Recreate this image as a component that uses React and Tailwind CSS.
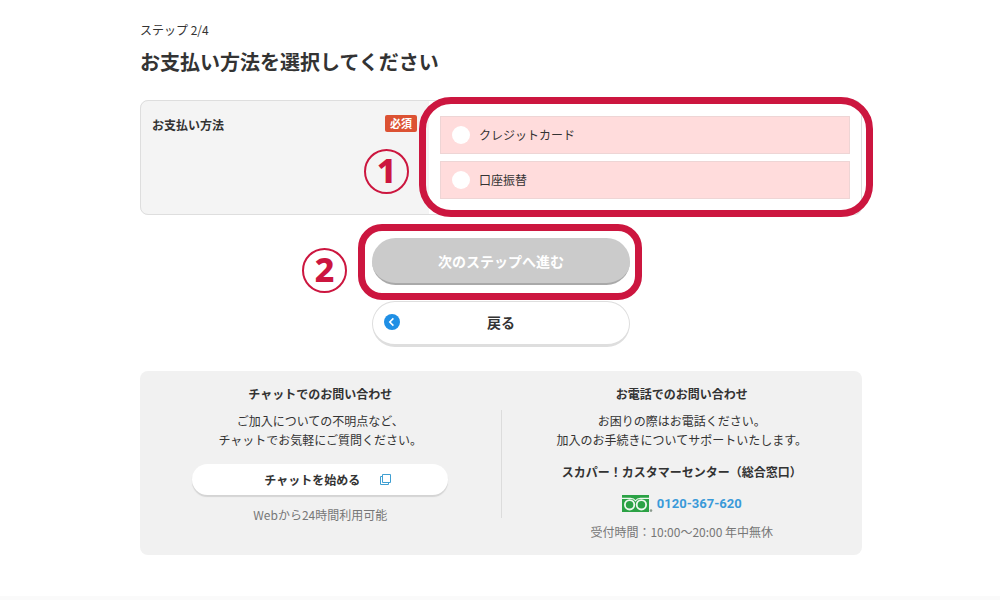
import { useState } from "react";

const methods = [
  { id: "credit", label: "クレジットカード" },
  { id: "bank", label: "口座振替" },
];

function Marker({ children }) {
  return (
    <span className="flex size-[45px] items-center justify-center rounded-full border-2 border-[#cc163f] pb-1 font-['Noto_Sans',sans-serif] text-[34px] leading-none font-extrabold text-[#cc163f]">
      {children}
    </span>
  );
}

function BackIcon() {
  return (
    <svg viewBox="0 0 16 16" className="size-4" aria-hidden="true">
      <circle cx="8" cy="8" r="8" fill="#1f8fe5" />
      <path d="M9.4 4.4 5.8 8l3.6 3.6" fill="none" stroke="#fff" strokeWidth="1.6" />
    </svg>
  );
}

function WindowIcon() {
  return (
    <svg viewBox="0 0 11 11" className="size-[11px] fill-none stroke-[#3f9fd2]" aria-hidden="true">
      <path d="M2.5 .5h8v8h-8z" />
      <path d="M2.5 2.5h-2v8h8v-2" />
    </svg>
  );
}

function FreeDialIcon() {
  return (
    <svg viewBox="0 0 31 18" className="h-[18px] w-[31px]" aria-hidden="true">
      <path d="M0 0h27v17H0z" fill="#2ba245" />
      <g fill="none" stroke="#eef8ef">
        <circle cx="7.6" cy="9.8" r="4.7" strokeWidth="1.8" />
        <circle cx="19.4" cy="9.8" r="4.7" strokeWidth="1.8" />
        <path d="M0 3.4h8.6c2.4 0 3.9 .8 4.9 2.4 1-1.6 2.5-2.4 4.9-2.4H27" strokeWidth="1.1" />
      </g>
      <circle cx="29" cy="15.6" r="1.3" fill="#8a9a8d" />
    </svg>
  );
}

export default function App() {
  const [method, setMethod] = useState("");

  return (
    <main className="min-h-screen border-b-4 border-[#fafafa] bg-white pt-5 font-['Noto_Sans_CJK_JP',sans-serif] text-xs text-[#333]">
      <div className="mx-auto max-w-[724px] pl-0.5">
        <p className="leading-5">ステップ 2/4</p>
        <h1 className="mt-1 text-xl leading-9 font-bold">お支払い方法を選択してください</h1>

        {/* お支払い方法 */}
        <fieldset className="mt-5 flex rounded-lg border border-[#dedede] bg-[#f4f4f4]">
          <div className="relative flex w-2/5 items-start justify-between py-3.5 pr-3 pl-[11px]">
            <span id="method-label" className="leading-5 font-bold">お支払い方法</span>
            <span className="rounded-xs bg-[#dc5233] px-[5px] text-[11px] leading-[17px] font-bold text-white">必須</span>
            <div className="absolute right-5 bottom-5">
              <Marker>1</Marker>
            </div>
          </div>
          <div
            role="radiogroup"
            aria-labelledby="method-label"
            className="relative flex flex-1 flex-col gap-[7px] rounded-r-lg bg-white px-[11px] py-[15px]"
          >
            {methods.map((m) => (
              <label
                key={m.id}
                className="flex h-[38px] items-center gap-[9px] border border-[#eed5d5] bg-[#ffdcdc] pl-[11px]"
              >
                <input
                  type="radio"
                  name="method"
                  value={m.id}
                  checked={method === m.id}
                  onChange={(e) => setMethod(e.target.value)}
                  className="size-[18px] appearance-none rounded-full bg-white checked:border-4 checked:border-[#1f8fe5]"
                />
                {m.label}
              </label>
            ))}
            <div className="pointer-events-none absolute -top-1 -right-3 -bottom-[3px] -left-2.5 rounded-[32px] border-[7px] border-[#cc163f]" />
          </div>
        </fieldset>

        <div className="mx-auto mt-[23px] flex max-w-[258px] flex-col gap-4">
          <div className="relative">
            <button
              type="button"
              className="block h-[47px] w-full rounded-full border-b-2 border-[#a9a9a9] bg-[#cbcbcb] text-sm font-bold text-white"
            >
              次のステップへ進む
            </button>
            <div className="pointer-events-none absolute -top-3.5 -right-3 -bottom-[15px] -left-3.5 z-10 rounded-3xl border-[7px] border-[#cc163f]" />
            <div className="absolute top-2.5 right-full mr-[25px]">
              <Marker>2</Marker>
            </div>
          </div>
          <button
            type="button"
            className="relative block h-[46px] w-full rounded-full border border-b-3 border-[#dedede] bg-white pb-0.5 text-sm font-bold"
          >
            <span className="absolute top-3 left-[11px]">
              <BackIcon />
            </span>
            戻る
          </button>
        </div>

        {/* お問い合わせ */}
        <div className="mt-6 flex items-stretch rounded-lg bg-[#f1f1f1] py-[13px] text-center">
          <section className="flex-1">
            <h2 className="leading-5 font-bold">チャットでのお問い合わせ</h2>
            <p className="mt-[7px] leading-[19px]">
              ご加入についての不明点など、
              <br />
              チャットでお気軽にご質問ください。
            </p>
            <button
              type="button"
              className="relative mx-auto mt-[15px] block h-[31px] w-full max-w-[256px] rounded-full bg-white font-bold shadow-[0_2px_1px_#d4d4d4]"
            >
              <span className="pr-4">チャットを始める</span>
              <span className="absolute top-2.5 right-[57px]">
                <WindowIcon />
              </span>
            </button>
            <p className="mt-2.5 leading-5 text-[#777]">Webから24時間利用可能</p>
          </section>
          <div className="my-[26px] mb-6 w-px bg-[#dcdcdc]" />
          <section className="flex-1">
            <h2 className="leading-5 font-bold">お電話でのお問い合わせ</h2>
            <p className="mt-[7px] leading-[19px]">
              お困りの際はお電話ください。
              <br />
              加入のお手続きについてサポートいたします。
            </p>
            <p className="mt-[13px] leading-5 font-bold">スカパー！カスタマーセンター（総合窓口）</p>
            <a
              href="tel:0120367620"
              className="mt-3 flex items-center justify-center gap-1 font-[Roboto,sans-serif] text-[13px] leading-5 font-bold text-[#3a9ad9]"
            >
              <FreeDialIcon />
              0120-367-620
            </a>
            <p className="mt-2 leading-5 text-[#777]">受付時間：10:00〜20:00 年中無休</p>
          </section>
        </div>
      </div>
    </main>
  );
}
